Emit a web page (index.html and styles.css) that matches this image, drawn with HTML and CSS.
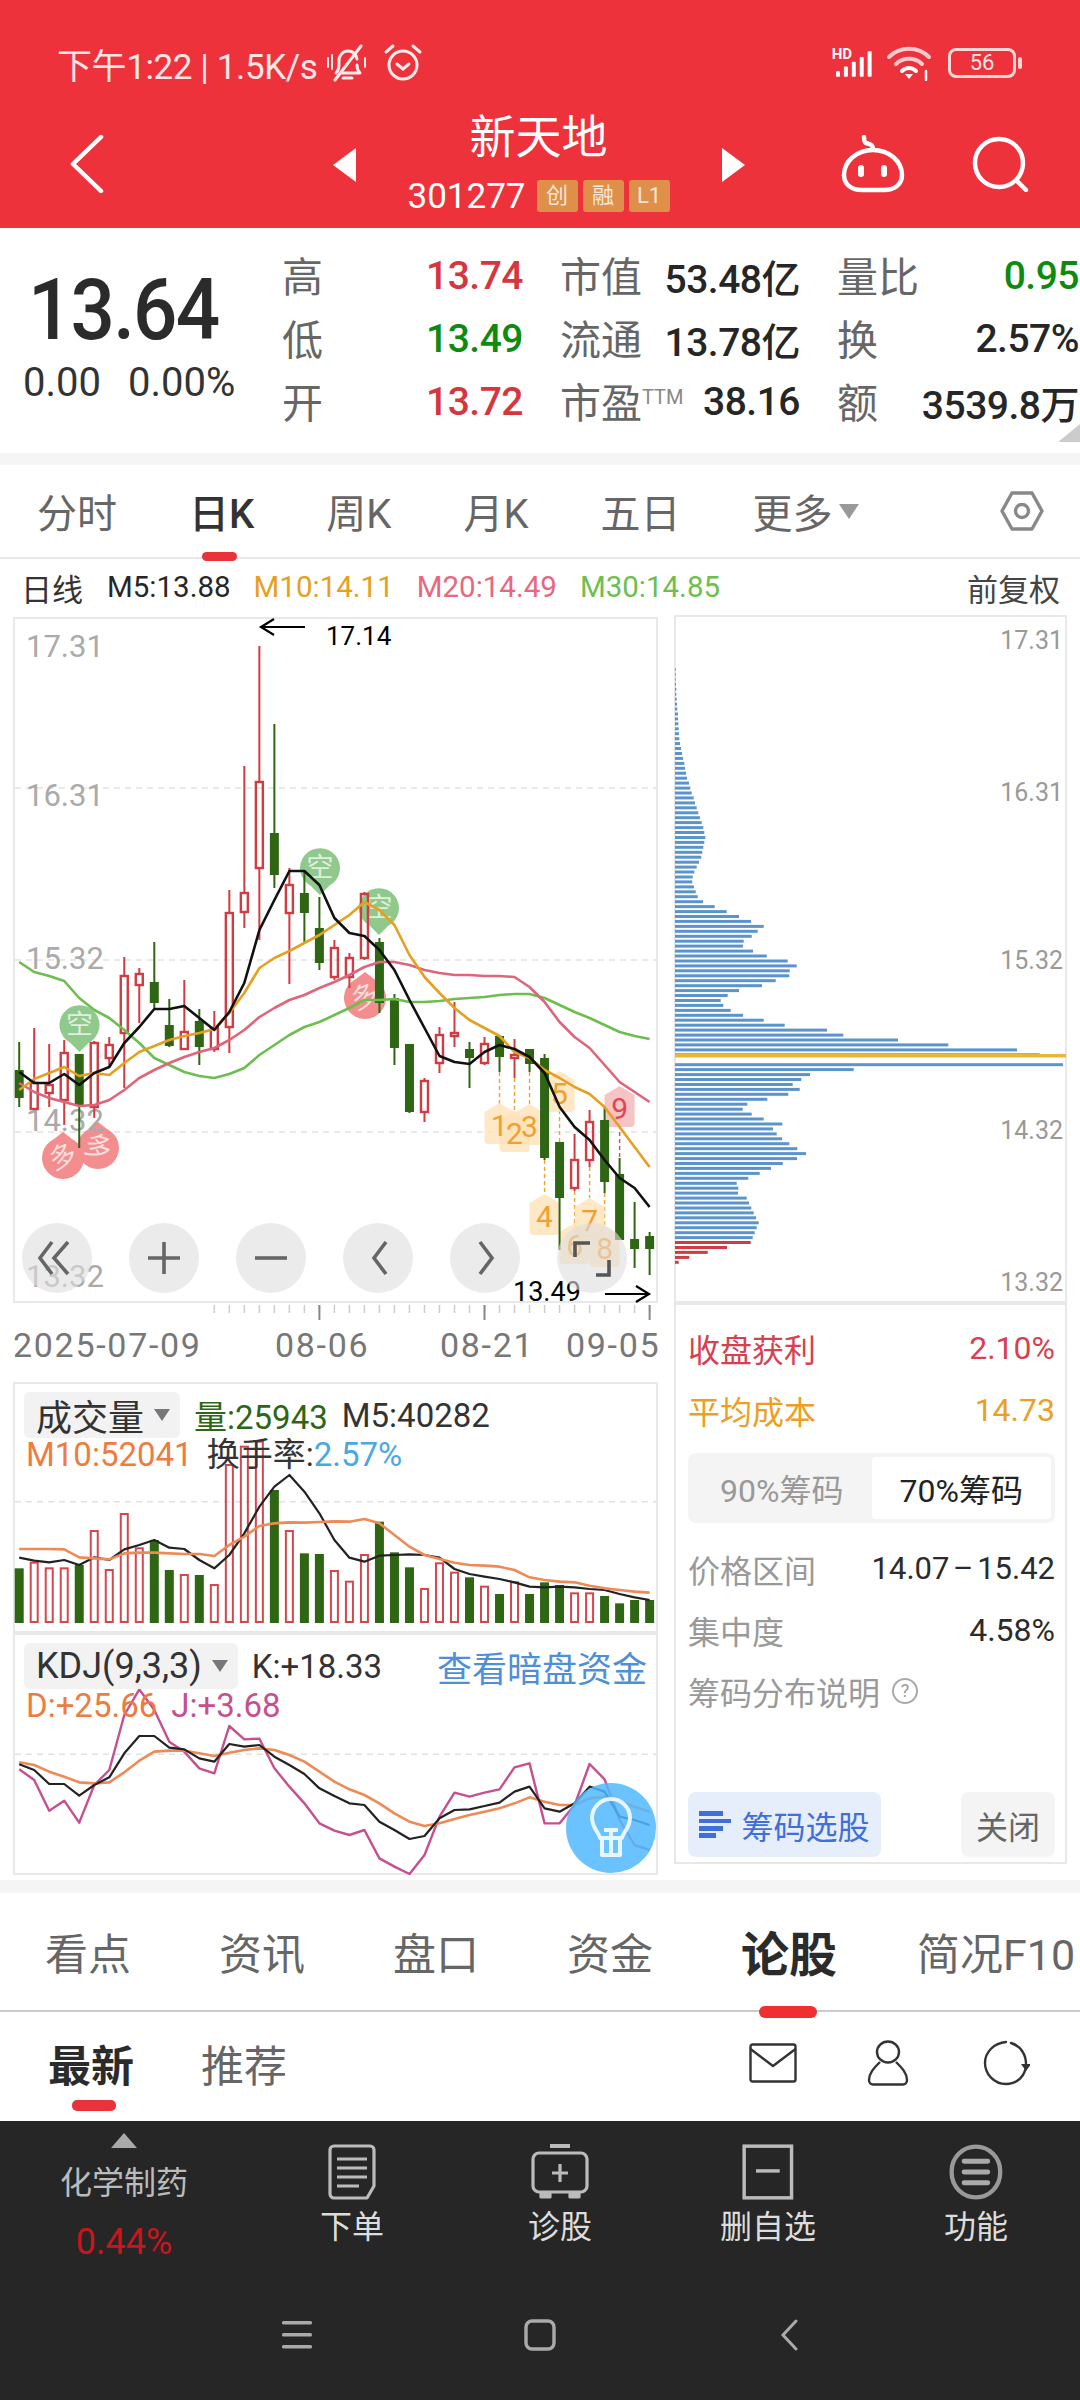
FILE: index.html
```html
<!DOCTYPE html>
<html lang="zh-CN">
<head>
<meta charset="UTF-8" />
<meta name="viewport" content="width=device-width, initial-scale=1" />
<title>新天地 301277</title>
<link rel="stylesheet" href="styles.css">
</head>
<body>

<header class="top">
  <div class="statusbar">
    <span class="status-text">下午1:22 | 1.5K/s</span>
    <svg class="ic-bell" viewBox="0 0 44 44" fill="none" stroke="#fff" stroke-width="3" stroke-linecap="round" stroke-linejoin="round">
      <path d="M11 32c3-3 3-6 3-12 0-6 4-10 9-10s8 3 9 8M32 24c0 4 1 6 3 8H16"/>
      <path d="M18 37h9"/><path d="M36 5 10 39"/><path d="M3 17v9M7 14v14M40 17v9" stroke-width="2"/>
    </svg>
    <svg class="ic-alarm" viewBox="0 0 40 40" fill="none" stroke="#fff" stroke-width="3" stroke-linecap="round">
      <circle cx="20" cy="22" r="14"/><path d="M14 21l6 5 6-5"/><path d="M3 9l7-6M37 9l-7-6"/>
    </svg>
    <span class="status-gap"></span>
    <span class="hd">HD</span>
    <svg class="ic-signal" viewBox="0 0 48 34" fill="#fff">
      <rect x="0" y="26" width="5" height="7" rx="1"/><rect x="10" y="20" width="5" height="13" rx="1"/><rect x="20" y="14" width="5" height="19" rx="1"/><rect x="30" y="8" width="5" height="25" rx="1"/><rect x="40" y="1" width="5" height="32" rx="1"/>
    </svg>
    <svg class="ic-wifi" viewBox="0 0 46 36" fill="none" stroke="#fff" stroke-width="4" stroke-linecap="round">
      <path d="M3 12c11-11 29-11 40 0" opacity=".75"/><path d="M10 19c7-7 19-7 26 0" opacity=".75"/><path d="M16 26c4-4 10-4 14 0"/><path d="M23 34l-4-5h8z" fill="#fff" stroke="none"/><path d="M40 26v9" stroke-width="2.5"/>
    </svg>
    <span class="battery"><span class="battery-level">56</span></span>
  </div>
  <div class="navbar">
    <svg class="ic-back" viewBox="0 0 34 58" fill="none" stroke="#fff" stroke-width="4.5" stroke-linecap="round" stroke-linejoin="round"><path d="M31 2 3 29l28 27"/></svg>
    <div class="nav-center">
      <i class="arrow-left"></i>
      <div class="nav-title">
        <div class="stock-name">新天地</div>
        <div class="stock-code">301277<span class="badge">创</span><span class="badge">融</span><span class="badge">L1</span></div>
      </div>
      <i class="arrow-right"></i>
    </div>
    <svg class="ic-robot" viewBox="0 0 64 58" fill="none" stroke="#fff" stroke-width="4.5" stroke-linecap="round">
      <path d="M32 15c16 0 29 11 29 25 0 10-8 15-18 15H21C11 55 3 50 3 40c0-14 13-25 29-25z"/>
      <path d="M32 14c0-5-4-5-7-6-2-1-2-3-2-6"/>
      <path d="M20 33v6M43 33v6" stroke-width="6"/>
    </svg>
    <svg class="ic-search" viewBox="0 0 58 56" fill="none" stroke="#fff" stroke-width="4.5" stroke-linecap="round"><circle cx="27" cy="27" r="24"/><path d="M45 45l9 9"/></svg>
  </div>
</header>

<section class="quote">
  <div class="price-box">
    <div class="price">13.64</div>
    <div class="price-change"><span>0.00</span><span>0.00%</span></div>
  </div>
  <div class="quote-grid">
    <div class="cell"><span class="label">高</span><span class="red">13.74</span></div>
    <div class="cell"><span class="label">市值</span><span>53.48亿</span></div>
    <div class="cell"><span class="label">量比</span><span class="green">0.95</span></div>
    <div class="cell"><span class="label">低</span><span class="green">13.49</span></div>
    <div class="cell"><span class="label">流通</span><span>13.78亿</span></div>
    <div class="cell"><span class="label">换</span><span>2.57%</span></div>
    <div class="cell"><span class="label">开</span><span class="red">13.72</span></div>
    <div class="cell"><span class="label">市盈<sup class="ttm">TTM</sup></span><span>38.16</span></div>
    <div class="cell"><span class="label">额</span><span>3539.8万</span></div>
  </div>
  <i class="corner"></i>
</section>

<div class="band"></div>

<nav class="chart-tabs">
  <span>分时</span>
  <span class="on">日K</span>
  <span>周K</span>
  <span>月K</span>
  <span>五日</span>
  <span class="more">更多<i class="tri"></i></span>
  <svg class="ic-hex" viewBox="0 0 44 44" fill="none" stroke="#888" stroke-width="3.4" stroke-linejoin="round"><path d="M12 4h20l10 18-10 18H12L2 22z"/><circle cx="22" cy="22" r="6.5"/></svg>
</nav>

<div class="ma-line">
  <span class="ma-name">日线</span>
  <span class="ma5">M5:13.88</span>
  <span class="ma10">M10:14.11</span>
  <span class="ma20">M20:14.49</span>
  <span class="ma30">M30:14.85</span>
  <span class="adjust">前复权</span>
</div>

<main class="charts">
  <div class="col-left">
    <div class="panel panel-kline">
      <svg id="klineChart" class="plot" viewBox="13 617 645 686"></svg>
      <div class="zoom-btns">
        <button><svg viewBox="0 0 70 70" fill="none" stroke="#666" stroke-width="3.6"><path d="M30 19 18 35l12 16M46 19 32 35l14 16"/></svg></button>
        <button><svg viewBox="0 0 70 70" fill="none" stroke="#666" stroke-width="3.6"><path d="M19 35h32M35 19v32"/></svg></button>
        <button><svg viewBox="0 0 70 70" fill="none" stroke="#666" stroke-width="3.6"><path d="M19 35h32"/></svg></button>
        <button><svg viewBox="0 0 70 70" fill="none" stroke="#666" stroke-width="3.6"><path d="M43 19 31 35l12 16"/></svg></button>
        <button><svg viewBox="0 0 70 70" fill="none" stroke="#666" stroke-width="3.6"><path d="M30 19l12 16-12 16"/></svg></button>
        <button><svg viewBox="0 0 70 70" fill="none" stroke="#555" stroke-width="3.6"><path d="M18 34V20h15M52 37v15H39"/></svg></button>
      </div>
    </div>
    <svg id="dateAxis" class="date-axis" viewBox="13 1303 645 79"></svg>

    <div class="panel panel-vol">
      <svg id="volChart" class="plot" viewBox="13 1382 645 251"></svg>
      <div class="plot-head">
        <div class="head-row">
          <span class="chip">成交量<i class="tri"></i></span>
          <span class="dark-green">量:25943</span>
          <span>M5:40282</span>
        </div>
        <div class="head-row">
          <span class="orange">M10:52041</span>
          <span>换手率:<span class="blue">2.57%</span></span>
        </div>
      </div>
    </div>

    <div class="panel panel-kdj">
      <svg id="kdjChart" class="plot" viewBox="13 1633 645 242"></svg>
      <div class="plot-head">
        <div class="head-row">
          <span class="chip">KDJ(9,3,3)<i class="tri"></i></span>
          <span>K:+18.33</span>
          <span class="dark-link">查看暗盘资金</span>
        </div>
        <div class="head-row">
          <span class="orange">D:+25.66</span>
          <span class="magenta">J:+3.68</span>
        </div>
      </div>
      <div class="bulb">
        <svg viewBox="0 0 90 90" fill="none" stroke="#fff" stroke-width="4" stroke-linejoin="round" opacity=".85"><path d="M34 55c-1-6-8-10-8-20a19 19 0 0 1 38 0c0 10-7 14-8 20z"/><path d="M36 72h18v-17H36zM38 47h14M45 47v25"/></svg>
      </div>
    </div>
  </div>

  <div class="col-right">
    <div class="panel panel-chips">
      <svg id="chipChart" class="plot" viewBox="674 615 393 688"></svg>
    </div>
    <div class="panel panel-stats">
      <div class="stat-row stat-hi stat-red"><span>收盘获利</span><span>2.10%</span></div>
      <div class="stat-row stat-hi stat-orange"><span>平均成本</span><span>14.73</span></div>
      <div class="segment"><span>90%筹码</span><span class="seg-on">70%筹码</span></div>
      <div class="stat-row"><span class="muted">价格区间</span><span class="range">14.07 – 15.42</span></div>
      <div class="stat-row"><span class="muted">集中度</span><span>4.58%</span></div>
      <div class="stat-row stat-note"><span class="muted">筹码分布说明</span><i class="help">?</i></div>
      <div class="stat-actions">
        <span class="btn-pick">
          <svg viewBox="0 0 32 28" fill="#3f6fd8"><rect y="0" width="24" height="5"/><rect y="8" width="32" height="4"/><rect y="15" width="24" height="5"/><rect y="22" width="17" height="5"/></svg>
          筹码选股
        </span>
        <span class="btn-close">关闭</span>
      </div>
    </div>
  </div>
</main>

<div class="band band-low"></div>

<nav class="info-tabs">
  <span>看点</span>
  <span>资讯</span>
  <span>盘口</span>
  <span>资金</span>
  <span class="on">论股</span>
  <span class="last">简况F10</span>
</nav>

<div class="sub-tabs">
  <span class="sub-on">最新</span>
  <span>推荐</span>
  <span class="sub-gap"></span>
  <svg class="ic-mail" viewBox="0 0 48 40" fill="none" stroke="#333" stroke-width="2.4" stroke-linejoin="round"><rect x="1.5" y="1.5" width="45" height="37" rx="2"/><path d="M1.5 6 24 23 46.5 6"/></svg>
  <svg class="ic-user" viewBox="0 0 42 46" fill="none" stroke="#333" stroke-width="2.4" stroke-linejoin="round"><ellipse cx="21" cy="12" rx="11" ry="10.5"/><path d="M13 22C7 28 2 33 2 40c0 3 2 4.500 4 4.500h30c2 0 4-1.500 4-4.500 0-7-5-12-11-18"/></svg>
  <svg class="ic-refresh" viewBox="0 0 48 46" fill="none" stroke="#333" stroke-width="2.4" stroke-linecap="round"><path d="M24 2C12 3 3 12 3 23s9 21 21 21 20-9 20-20c0-9-5-18-15-21"/><path d="M39 24h10l-5 7z" fill="#333" stroke="none"/></svg>
</div>

<footer class="bottom">
  <div class="tool-row">
    <div class="sector">
      <i class="sector-up"></i>
      <div class="sector-name">化学制药</div>
      <div class="sector-pct">0.44%</div>
    </div>
    <div class="tool">
      <svg class="ic-doc" viewBox="0 0 48 56" fill="none" stroke="#bbb" stroke-width="3.2" stroke-linejoin="round"><path d="M6 2h36a4 4 0 0 1 4 4v36l-7 12H6a4 4 0 0 1-4-4V6a4 4 0 0 1 4-4z"/><path d="M9 15h30M9 24h30M9 33h30M9 42h22"/></svg>
      <span>下单</span>
    </div>
    <div class="tool">
      <svg class="ic-case" viewBox="0 0 58 56" fill="none" stroke="#bbb" stroke-width="3.2" stroke-linejoin="round"><path d="M19 2h20" stroke-width="4"/><rect x="2" y="9" width="54" height="39" rx="6"/><path d="M29 20v18M21 29h16"/><path d="M10 49h9v4h-9zM39 49h9v4h-9z" fill="#bbb"/></svg>
      <span>诊股</span>
    </div>
    <div class="tool">
      <svg class="ic-minus" viewBox="0 0 48 52" fill="none" stroke="#bbb" stroke-width="3.2"><rect x="2" y="2" width="44" height="48"/><path d="M13 25h22"/></svg>
      <span>删自选</span>
    </div>
    <div class="tool">
      <svg class="ic-menu" viewBox="0 0 50 52" fill="none" stroke="#999" stroke-width="4"><rect x="2.500" y="2.500" width="45" height="47" rx="22.500"/><path d="M14 16h22M14 26h22M14 36h22" stroke-width="4.500" stroke="#aaa" stroke-linecap="round"/></svg>
      <span>功能</span>
    </div>
  </div>
  <div class="sys-nav">
    <svg class="nav-lines" viewBox="0 0 30 28" fill="#aaa"><rect width="30" height="3.500" rx="1.500"/><rect y="12" width="30" height="3.500" rx="1.500"/><rect y="24" width="30" height="3.500" rx="1.500"/></svg>
    <svg class="nav-home" viewBox="0 0 32 32" fill="none" stroke="#aaa" stroke-width="3.400"><rect x="2" y="2" width="28" height="28" rx="6"/></svg>
    <svg class="nav-back" viewBox="0 0 18 32" fill="none" stroke="#aaa" stroke-width="3" stroke-linecap="round"><path d="M16 2 3 16l13 14"/></svg>
  </div>
</footer>

<script src="chart.js"></script>
</body>
</html>
```

FILE: styles.css
```css
* {
  box-sizing: border-box;
}
body {
  margin: 0;
  width: 1080px;
  height: 2400px;
  overflow: hidden;
  background: #fff;
  color: #262626;
  font-family: Roboto, "Noto Sans CJK SC", sans-serif;
}
i {
  font-style: normal;
}

/* header */
.top {
  height: 228px;
  background: #ee323b;
  color: #fff;
}
.statusbar {
  height: 102px;
  padding: 24px 64px 0 57px;
  display: flex;
  align-items: center;
}
.status-text {
  font-size: 35px;
  letter-spacing: -0.4px;
  color: #fde6e6;
}
.ic-bell {
  width: 44px;
  height: 44px;
  margin-left: 8px;
  opacity: .9;
}
.ic-alarm {
  width: 40px;
  height: 40px;
  margin-left: 14px;
  opacity: .9;
}
.status-gap {
  flex: 1;
}
.hd {
  font-size: 15px;
  font-weight: 700;
  margin: -18px -16px 0 0;
}
.ic-signal {
  width: 38px;
  height: 30px;
  margin-top: 2px;
}
.ic-wifi {
  width: 46px;
  height: 36px;
  margin-left: 12px;
}
.battery {
  width: 68px;
  height: 30px;
  margin-left: 16px;
  border: 3px solid #fbd6d6;
  border-radius: 8px;
  display: flex;
  align-items: center;
  justify-content: center;
  position: relative;
}
.battery::after {
  content: "";
  position: absolute;
  right: -9px;
  top: 6px;
  width: 4px;
  height: 12px;
  border-radius: 2px;
  background: #fbd6d6;
}
.battery-level {
  font-size: 22px;
  line-height: 22px;
  color: #fde6e6;
}
.navbar {
  height: 126px;
  padding: 0 50px 0 70px;
  display: flex;
  align-items: center;
}
.ic-back {
  width: 34px;
  height: 58px;
  margin-top: -2px;
}
.nav-center {
  flex: 1;
  padding-left: 132px;
  display: flex;
  align-items: center;
  justify-content: center;
  gap: 48px;
}
.nav-title {
  text-align: center;
  width: 270px;
}
.arrow-left, .arrow-right {
  width: 0;
  height: 0;
  border-top: 17px solid transparent;
  border-bottom: 17px solid transparent;
}
.arrow-left {
  border-right: 23px solid #fff;
}
.arrow-right {
  border-left: 23px solid #fff;
}
.stock-name {
  font-size: 46px;
  line-height: 62px;
  margin-top: -10px;
  margin-bottom: 12px;
}
.stock-code {
  font-size: 35px;
  line-height: 34px;
  display: flex;
  align-items: center;
  justify-content: center;
  gap: 5px;
}
.badge {
  width: 41px;
  height: 32px;
  margin-top: -2px;
  border-radius: 3px;
  background: #de8f4a;
  color: #fbe6d2;
  font-size: 22px;
  line-height: 32px;
  text-align: center;
}
.stock-code .badge:first-child {
  margin-left: 6px;
}
.ic-robot {
  width: 64px;
  height: 58px;
  margin-right: 67px;
  margin-top: -2px;
}
.ic-search {
  width: 58px;
  height: 56px;
  margin-top: -2px;
}

/* quote */
.quote {
  height: 225px;
  padding-top: 14px;
  display: flex;
  position: relative;
}
.price-box {
  width: 282px;
  padding-left: 24px;
}
.price {
  width: 200px;
  font-size: 85px;
  font-weight: 500;
  line-height: 100px;
  margin: 18px 0 0 4px;
  letter-spacing: -2px;
  color: #2b2b2b;
  white-space: nowrap;
  transform: scaleX(.92);
  transform-origin: left center;
}
.price-change {
  display: flex;
  gap: 27px;
  font-size: 40px;
  line-height: 48px;
  color: #333;
  margin-left: -1px;
  margin-top: -1px;
}
.quote-grid {
  width: 798px;
  display: grid;
  grid-template-columns: 241px 240px 242px;
  grid-auto-rows: 63px;
  column-gap: 37px;
}
.cell {
  display: flex;
  justify-content: space-between;
  align-items: center;
  font-size: 39px;
  font-weight: 500;
  letter-spacing: -0.5px;
}
.cell span:last-child {
  margin-top: 4px;
}
.cell .label {
  font-size: 41px;
  font-weight: 400;
  letter-spacing: 0;
  color: #666;
  white-space: nowrap;
}
.ttm {
  font-size: 20px;
  line-height: 0;
  vertical-align: 14px;
  color: #888;
}
.red {
  color: #d6373f;
}
.green {
  color: #0d8a10;
}
.corner {
  position: absolute;
  right: 0;
  bottom: 11px;
  border-left: 22px solid transparent;
  border-bottom: 18px solid #ccc;
}
.band {
  height: 12px;
  background: #f5f5f5;
}

/* kline tabs */
.chart-tabs {
  height: 94px;
  padding: 0 36px 0 37px;
  display: flex;
  align-items: center;
  gap: 72px;
  font-size: 40px;
  color: #666;
  border-bottom: 2px solid #e8e8e8;
  position: relative;
}
.chart-tabs .on {
  color: #333;
  font-weight: 500;
  position: relative;
}
.chart-tabs .on::after {
  content: "";
  position: absolute;
  left: 13px;
  bottom: -21px;
  width: 35px;
  height: 9px;
  border-radius: 5px;
  background: #e8333a;
}
.more {
  display: flex;
  align-items: center;
  gap: 6px;
}
.tri {
  display: inline-block;
  width: 0;
  height: 0;
  border-left: 10px solid transparent;
  border-right: 10px solid transparent;
  border-top: 15px solid #999;
}
.ic-hex {
  width: 44px;
  height: 44px;
  margin-left: auto;
}
.ma-line {
  height: 58px;
  padding: 0 20px 2px 21px;
  display: flex;
  align-items: center;
  gap: 23px;
  font-size: 29.500px;
}
.ma-name {
  color: #333;
  font-size: 31px;
  margin-right: 1px;
}
.ma10 {
  color: #e6a021;
}
.ma20 {
  color: #e8677f;
}
.ma30 {
  color: #6cbf4f;
}
.adjust {
  margin-left: auto;
  color: #444;
  font-size: 31px;
}

/* charts */
.charts {
  height: 1263px;
  padding-left: 13px;
  display: flex;
  gap: 16px;
}
.col-left {
  width: 645px;
}
.col-right {
  width: 393px;
  margin-top: -2px;
}
.panel {
  position: relative;
  box-shadow: inset 0 0 0 2px #e8e8e8;
}
.plot, .date-axis {
  display: block;
  width: 100%;
  height: 100%;
  overflow: visible;
}
.pin-text {
  font-size: 27px;
  text-anchor: middle;
  fill: rgba(255, 255, 255, .72);
}
.panel-kline {
  height: 686px;
}
.date-axis {
  height: 79px;
}
.panel-vol {
  height: 251px;
}
.panel-kdj {
  height: 242px;
}
.zoom-btns {
  position: absolute;
  left: 9px;
  bottom: 10px;
  display: flex;
  gap: 37px;
}
.zoom-btns button {
  width: 70px;
  height: 70px;
  padding: 0;
  border: none;
  border-radius: 50%;
  background: rgba(222, 222, 222, .6);
}
.zoom-btns svg {
  display: block;
}
.plot-head {
  position: absolute;
  left: 11px;
  right: 11px;
  top: 10px;
  font-size: 33px;
  color: #333;
}
.head-row {
  display: flex;
  align-items: center;
  gap: 14px;
  height: 46px;
}
.head-row + .head-row {
  height: 34px;
  line-height: 34px;
  padding-left: 2px;
  gap: 14px;
}
.chip {
  height: 46px;
  padding: 0 10px 0 12px;
  border-radius: 6px;
  background: #f2f2f2;
  display: flex;
  align-items: center;
  gap: 10px;
  font-size: 36px;
  white-space: nowrap;
}
.chip .tri {
  border-left-width: 8px;
  border-right-width: 8px;
  border-top-width: 12px;
  border-top-color: #777;
}
.dark-green {
  color: #2f6614;
}
.orange {
  color: #ee7b3f;
}
.blue {
  color: #4aa8e0;
}
.magenta {
  color: #c84f8f;
}
.dark-link {
  margin-left: auto;
  color: #4e8fd8;
  font-size: 35px;
}
.bulb {
  position: absolute;
  right: 2px;
  bottom: 2px;
  width: 90px;
  height: 90px;
  border-radius: 50%;
  background: rgba(80, 185, 255, .85);
}
.bulb svg {
  display: block;
}

/* right column */
.panel-chips {
  height: 688px;
}
.panel-stats {
  height: 561px;
  padding: 14px 12px 0 14px;
  display: flex;
  flex-direction: column;
}
.stat-row {
  display: flex;
  justify-content: space-between;
  align-items: center;
  height: 61px;
  font-size: 32px;
  color: #2b2b2b;
}
.range {
  font-size: 31px;
  word-spacing: -4px;
}
.stat-hi {
  height: 62px;
}
.stat-red {
  color: #d8404f;
}
.stat-orange {
  color: #eba022;
}
.muted {
  color: #999;
}
.segment {
  height: 70px;
  margin: 12px 0 15px;
  padding: 4px;
  border-radius: 8px;
  background: #f4f4f4;
  display: flex;
  font-size: 32px;
  color: #999;
}
.segment span {
  flex: 1;
  display: flex;
  align-items: center;
  justify-content: center;
}
.seg-on {
  background: #fff;
  color: #222;
  border-radius: 4px;
}
.stat-note {
  justify-content: flex-start;
  gap: 12px;
}
.help {
  width: 26px;
  height: 26px;
  border: 2px solid #aaa;
  border-radius: 50%;
  color: #999;
  font-size: 18px;
  line-height: 22px;
  text-align: center;
}
.stat-actions {
  margin-top: 71px;
  display: flex;
  justify-content: space-between;
}
.stat-actions span {
  height: 65px;
  border-radius: 8px;
  display: flex;
  align-items: center;
  justify-content: center;
  font-size: 32px;
}
.btn-pick {
  width: 193px;
  background: #e6edfb;
  color: #3f6fd8;
  gap: 10px;
}
.btn-pick svg {
  width: 32px;
  height: 28px;
}
.btn-close {
  width: 94px;
  background: #f4f4f4;
  color: #666;
}

/* lower tabs */
.band-low {
  height: 13px;
}
.info-tabs {
  height: 119px;
  padding: 0 0 2px 45px;
  display: flex;
  align-items: center;
  gap: 88px;
  font-size: 43px;
  color: #666;
  border-bottom: 2px solid #ccc;
  white-space: nowrap;
}
.info-tabs .on {
  font-size: 48px;
  font-weight: 700;
  color: #2b2b2b;
  position: relative;
}
.info-tabs .on::after {
  content: "";
  position: absolute;
  left: 18px;
  bottom: -32px;
  width: 58px;
  height: 12px;
  border-radius: 6px;
  background: #f03030;
}
.info-tabs .last {
  margin-left: -8px;
}
.sub-tabs {
  height: 109px;
  padding: 0 50px 8px 48px;
  display: flex;
  align-items: center;
  gap: 67px;
  font-size: 43px;
  color: #666;
}
.sub-on {
  font-weight: 700;
  color: #2b2b2b;
  position: relative;
}
.sub-on::after {
  content: "";
  position: absolute;
  left: 24px;
  bottom: -17px;
  width: 44px;
  height: 11px;
  border-radius: 5px;
  background: #e8333a;
}
.sub-gap {
  flex: 1;
}
.ic-mail {
  width: 48px;
  height: 40px;
}
.ic-user {
  width: 42px;
  height: 46px;
  margin-left: 3px;
}
.ic-refresh {
  width: 48px;
  height: 46px;
  margin-left: 6px;
}

/* dark bottom */
.bottom {
  height: 279px;
  background: #262626;
}
.tool-row {
  height: 174px;
  display: grid;
  grid-template-columns: 248px repeat(4, 208px);
}
.sector {
  padding-top: 12px;
  text-align: center;
}
.sector-up {
  display: block;
  width: 0;
  margin: 0 auto;
  border-left: 13px solid transparent;
  border-right: 13px solid transparent;
  border-bottom: 15px solid #aaa;
}
.sector-name {
  font-size: 32px;
  line-height: 44px;
  margin-top: 13px;
  color: #bbb;
}
.sector-pct {
  font-size: 36px;
  line-height: 44px;
  margin-top: 15px;
  color: #c8161d;
}
.tool {
  position: relative;
  padding-top: 23px;
  display: flex;
  flex-direction: column;
  align-items: center;
  color: #ddd;
  font-size: 32px;
}
.tool svg {
  display: block;
  height: 56px;
}
.tool span {
  position: absolute;
  top: 80px;
}
.sys-nav {
  height: 80px;
  padding-left: 282px;
  display: flex;
  align-items: center;
}
.nav-lines {
  width: 30px;
  height: 28px;
}
.nav-home {
  width: 32px;
  height: 32px;
  margin-left: 212px;
}
.nav-back {
  width: 18px;
  height: 32px;
  margin-left: 224px;
}
```

FILE: chart.js
```js
// x position of a daily candle, all plots share it
const dayX = (i) => 19.2 + 15.01 * i;

// [type, high, bodyTop, bodyBottom, low]
const candles = [
  ['g',1042,1070,1098,1107],['r',1028,1083,1109,1110],['r',1044,1085,1093,1107],['r',1040,1053,1100,1125],
  ['g',1054,1054,1105,1148],['r',1041,1043,1107,1118],['r',1037,1045,1058,1067],['r',957,976,1033,1088],
  ['r',968,974,985,1023],['g',942,982,1003,1010],['g',999,1025,1046,1047],['r',980,1032,1049,1050],
  ['g',1009,1021,1047,1065],['r',1011,1028,1049,1052],['r',890,913,1027,1053],['r',766,893,912,928],
  ['r',646,782,868,940],['g',724,833,875,888],['r',868,885,913,984],['g',872,893,913,943],
  ['g',897,928,963,970],['r',940,948,977,980],['r',953,958,977,988],['r',892,894,958,960],
  ['g',938,942,1003,1013],['g',994,998,1048,1065],['g',1044,1044,1112,1113],['r',1078,1081,1112,1122],
  ['r',1027,1035,1063,1073],['r',1002,1033,1036,1047],['g',1042,1049,1058,1088],['r',1037,1044,1063,1065],
  ['g',1035,1036,1057,1072],['r',1039,1055,1058,1078],['g',1049,1049,1064,1072],['g',1054,1058,1158,1160],
  ['g',1142,1142,1198,1250],['r',1134,1160,1188,1191],['r',1110,1122,1160,1167],['g',1107,1120,1182,1193],
  ['g',1158,1174,1240,1240],['g',1202,1239,1249,1268],['g',1232,1236,1249,1275]
];

const ma5 = [1072,1083,1083,1074,1085,1073,1067,1043,1027,1009,1009,1006,1018,1030,1012,983,930,900,871,871,885,918,933,936,950,970,1000,1028,1056,1062,1064,1052,1045,1049,1057,1073,1107,1127,1140,1160,1178,1188,1207];
const ma10 = [1090,1079,1073,1067,1076,1073,1075,1063,1052,1046,1040,1036,1033,1029,1013,993,968,958,951,943,935,925,915,902,910,925,955,977,993,1008,1020,1028,1036,1052,1058,1070,1078,1087,1094,1107,1127,1147,1167];
const ma20 = [1083,1092,1098,1102,1106,1105,1100,1090,1078,1070,1063,1057,1052,1048,1040,1030,1017,1008,1000,995,988,982,975,967,962,962,965,970,973,975,975,976,976,977,987,1002,1022,1037,1048,1065,1082,1092,1102];
const ma30 = [962,972,976,981,998,1010,1018,1030,1043,1058,1065,1072,1076,1078,1074,1068,1055,1045,1035,1027,1022,1015,1008,1000,1000,999,1002,1002,1001,999,998,997,995,994,994,998,1005,1012,1018,1025,1032,1036,1039];

const RED = '#d13b42';
const GREEN = '#2f6614';

function line(points, color, width) {
  const pts = points.map((y, i) => `${dayX(i).toFixed(1)},${y}`).join(' ');
  return `<polyline points="${pts}" fill="none" stroke="${color}" stroke-width="${width}" stroke-linejoin="round"/>`;
}

function dashed(y, x1 = 15, x2 = 656) {
  return `<line x1="${x1}" x2="${x2}" y1="${y}" y2="${y}" stroke="#e2e2e2" stroke-width="1.500" stroke-dasharray="6 5"/>`;
}

function candle(c, i) {
  const x = dayX(i);
  const [type, high, top, bottom, low] = c;
  if (type === 'g') {
    return `<path d="M${x} ${high}V${low}" stroke="${GREEN}" stroke-width="2"/>` +
      `<rect x="${x - 4.5}" y="${top}" width="9" height="${bottom - top}" fill="${GREEN}"/>`;
  }
  return `<path d="M${x} ${high}V${top}M${x} ${bottom}V${low}" stroke="${RED}" stroke-width="2"/>` +
    `<rect x="${x - 3.500}" y="${top}" width="7" height="${bottom - top}" fill="none" stroke="${RED}" stroke-width="2.400"/>`;
}

// 空 pin points down, 多 pin points up
function shortPin(x, y) {
  return `<path d="M${x} ${y + 27}l-9-9a20 20 0 1 1 18 0z" fill="#8fc98c"/>` +
    `<text x="${x}" y="${y + 9}" class="pin-text">空</text>`;
}
function longPin(x, y, tilt) {
  return `<path d="M${x} ${y - 25}l-9 7a21 21 0 1 0 18 0z" fill="#f48e8e"/>` +
    `<text x="${x}" y="${y + 9}" class="pin-text" transform="rotate(${tilt} ${x} ${y})">多</text>`;
}

const ORG = '#f0a030';
const BG = '#ffe2b8';

function badgeShape(x, y, bg) {
  return `<path d="M${x} ${y - 22}l15 9v28q0 4-4 4h-22q-4 0-4-4v-28z" fill="${bg}" opacity=".8"/>`;
}
function badgeText(x, y, n, fg) {
  return `<text x="${x}" y="${y + 11}" font-size="30" text-anchor="middle" font-family="Roboto" fill="${fg}">${n}</text>`;
}

function drop(x, y1, y2, color) {
  return `<line x1="${x}" x2="${x}" y1="${y1}" y2="${y2}" stroke="${color}" stroke-width="1.400" stroke-dasharray="4 3"/>`;
}

function drawKline() {
  const svg = document.getElementById('klineChart');
  let html = '';
  html += dashed(788) + dashed(960) + dashed(1132);

  html += shortPin(320, 868) + shortPin(379, 908) + shortPin(79.500, 1025);
  html += longPin(63, 1157, -22) + longPin(98, 1147, 18) + longPin(365, 997, -22);

  const labels = [[646, '17.31'], [795, '16.31'], [958, '15.32'], [1120, '14.32'], [1276, '13.32']];
  labels.forEach(([y, t]) => {
    html += `<text x="26" y="${y + 11}" font-size="31" font-family="Roboto" fill="#aaa">${t}</text>`;
  });

  html += drop(dayX(32), 1072, 1105, ORG) + drop(dayX(33), 1078, 1112, ORG) + drop(dayX(34), 1072, 1105, ORG);
  html += drop(dayX(35), 1160, 1194, ORG) + drop(dayX(36), 1110, 1142, ORG) + drop(dayX(37), 1191, 1227, ORG);
  html += drop(dayX(38), 1167, 1198, ORG) + drop(dayX(39), 1193, 1226, ORG) + drop(dayX(40), 1125, 1158, '#e04550');

  const marks = [[32, 1125, 1], [33, 1133, 2], [34, 1126, 3], [35, 1216, 4], [36, 1093, 5], [37, 1245, 6], [38, 1220, 7], [39, 1248, 8]];
  marks.forEach(([i, y]) => {
    html += badgeShape(dayX(i), y, BG);
  });
  html += badgeShape(dayX(40), 1108, '#f5b5b8');
  marks.forEach(([i, y, n]) => {
    html += badgeText(dayX(i), y, n, ORG);
  });
  html += badgeText(dayX(40), 1108, 9, '#e04550');

  html += candles.map(candle).join('');
  html += line(ma30, '#6dbe4f', 2.600) + line(ma20, '#e0647a', 2.600) + line(ma10, '#e6a021', 2.600) + line(ma5, '#111', 2.600);

  // high and low markers
  html += `<path d="M305 627H261M274 619l-13 8 13 8" fill="none" stroke="#000" stroke-width="2.200"/>`;
  html += `<text x="326" y="645" font-size="26" font-family="Roboto" fill="#000">17.14</text>`;
  html += `<path d="M605 1294H649M636 1286l13 8-13 8" fill="none" stroke="#000" stroke-width="2.200"/>`;
  html += `<text x="513" y="1301" font-size="27" font-family="Roboto" fill="#000">13.49</text>`;
  svg.innerHTML = html;
}

function drawAxis() {
  const svg = document.getElementById('dateAxis');
  let html = '';
  for (let i = 13; i < 43; i++) {
    html += `<path d="M${dayX(i)} 1305V1313" stroke="#ccc" stroke-width="1.500"/>`;
  }
  [20, 31, 42].forEach((i) => {
    html += `<path d="M${dayX(i)} 1305V1320" stroke="#888" stroke-width="2"/>`;
  });
  const dates = [[13, '2025-07-09'], [275, '08-06'], [440, '08-21'], [566, '09-05']];
  dates.forEach(([x, t]) => {
    html += `<text x="${x}" y="1357" font-size="34" letter-spacing="1.700" font-family="Roboto" fill="#777">${t}</text>`;
  });
  svg.innerHTML = html;
}

// volume and kdj values were read off a 3x crop starting at y=1370
const zoomY = (z) => 1370 + z / 3;

function drawVolume() {
  const tops = [595,578,595,595,585,483,600,432,535,510,600,615,615,645,285,230,215,360,483,550,552,603,635,555,455,547,592,657,580,608,622,650,672,637,672,637,645,670,670,678,700,690,690];
  const m5 = [563,572,577,570,585,562,570,538,525,510,533,537,570,595,555,490,410,350,315,365,430,510,563,575,557,555,553,555,563,597,612,620,627,637,650,652,650,652,657,660,672,682,690];
  const m10 = [537,537,537,538,562,565,568,550,548,548,550,552,552,558,525,500,468,460,457,458,456,454,455,447,460,495,530,555,567,578,585,587,590,600,622,630,635,637,647,655,660,665,668];
  let html = dashed(zoomY(395));
  tops.forEach((t, i) => {
    const x = dayX(i);
    const y = zoomY(t);
    const h = 1623 - y;
    if (candles[i][0] === 'g') {
      html += `<rect x="${x - 4.500}" y="${y}" width="9" height="${h}" fill="${GREEN}"/>`;
    } else {
      html += `<rect x="${x - 3.500}" y="${y}" width="7" height="${h - 1}" fill="none" stroke="#d4474d" stroke-width="2"/>`;
    }
  });
  html += line(m5.map(zoomY), '#222', 2.200) + line(m10.map(zoomY), '#ee8a55', 2.600);
  document.getElementById('volChart').innerHTML = html;
}

function drawKdj() {
  const k = [1183,1200,1242,1242,1277,1245,1222,1150,1098,1098,1133,1138,1165,1175,1122,1130,1125,1160,1185,1212,1255,1278,1300,1305,1355,1380,1407,1398,1345,1320,1318,1308,1298,1265,1250,1315,1325,1300,1250,1265,1340,1350,1365];
  const d = [1177,1185,1205,1220,1237,1240,1237,1207,1172,1145,1142,1142,1150,1158,1148,1140,1135,1140,1155,1175,1205,1235,1258,1275,1300,1330,1355,1368,1360,1347,1335,1325,1315,1300,1282,1295,1305,1305,1285,1280,1295,1310,1325];
  const j = [1198,1230,1322,1292,1358,1245,1200,1035,958,1020,1115,1145,1195,1210,1068,1108,1106,1195,1250,1300,1360,1382,1395,1380,1465,1490,1512,1455,1340,1268,1280,1268,1258,1192,1180,1360,1360,1305,1182,1228,1350,1425,1440];
  let html = dashed(zoomY(1153));
  html += line(j.map(zoomY), '#c84f8f', 2.400) + line(d.map(zoomY), '#ee8a55', 2.600) + line(k.map(zoomY), '#222', 2.200);
  document.getElementById('kdjChart').innerHTML = html;
}

function drawChips() {
  // right ends of the bars, measured on the crop (x = 670 + v/3), one row every 4.94px
  const ends = [17,17,17,18,19,19,20,21,22,24,24,25,26,27,28,30,33,36,39,43,45,48,51,57,61,65,71,75,80,85,90,95,100,103,106,103,100,97,94,87,80,73,68,67,72,77,83,99,134,170,207,243,281,263,245,221,219,249,290,353,380,359,358,317,276,207,173,152,160,182,219,281,344,471,520,684,835,1041,1109,0,1179,551,420,394,368,389,355,292,232,218,245,281,337,309,320,336,358,382,408,381,338,303,269,235,200,205,204,230,237,244,251,258,266,260,254,248,242,171,113,58,26];
  let html = '';
  ends.forEach((v, i) => {
    if (!v) return;
    const y = 668 + i * 4.940;
    const isRed = i >= ends.length - 5;
    html += `<rect x="675" y="${y.toFixed(1)}" width="${((v - 15) / 3).toFixed(1)}" height="3" fill="${isRed ? '#d13b42' : '#5b94cc'}"/>`;
  });
  html += `<rect x="675" y="1054" width="391" height="3.500" fill="#e8b63c"/>`;
  const labels = [[640, '17.31'], [792, '16.31'], [960, '15.32'], [1130, '14.32'], [1282, '13.32']];
  labels.forEach(([y, t]) => {
    html += `<text x="1063" y="${y + 9}" font-size="25" text-anchor="end" font-family="Roboto" fill="#999">${t}</text>`;
  });
  document.getElementById('chipChart').innerHTML = html;
}

drawKline();
drawAxis();
drawVolume();
drawKdj();
drawChips();
```
